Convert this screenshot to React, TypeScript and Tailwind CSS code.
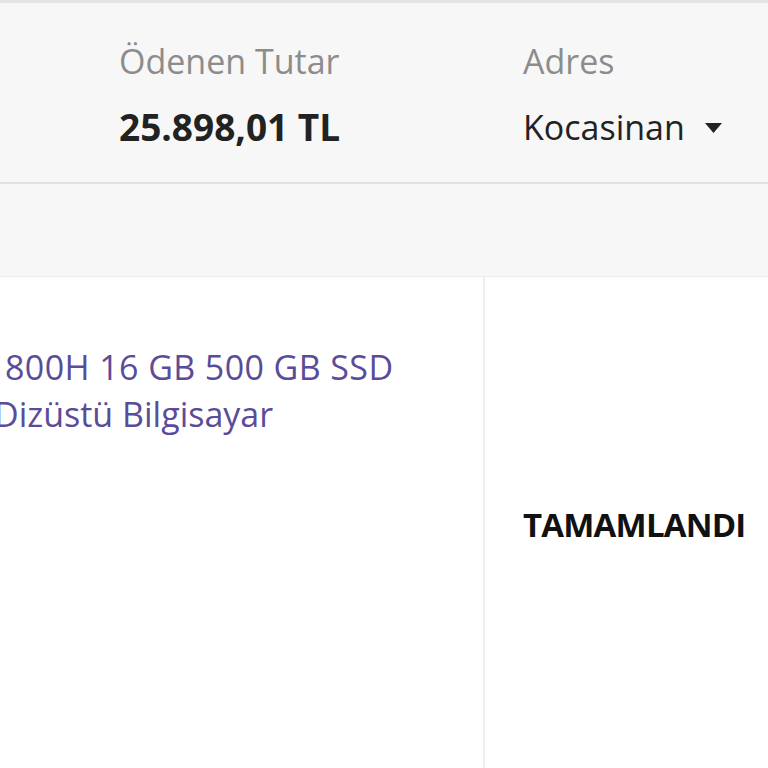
import React from "react";

export default function App() {
  return (
    <div
      className="w-[768px] h-[768px] overflow-hidden bg-white"
      style={{ fontFamily: '"Open Sans", "Liberation Sans", sans-serif' }}
    >
      <div className="border-t-[3px] border-[#e4e4e4] bg-[#f7f7f7] h-[184px] border-b-2 border-b-[#e2e2e2] flex">
        <div className="w-[523px] pl-[119px] pt-[36px] shrink-0">
          <div className="text-[34px] leading-[44px] text-[#8c8c8c]">Ödenen Tutar</div>
          <div className="mt-[22px] text-[37px] leading-[44px] font-bold text-[#222222]">
            25.898,01 TL
          </div>
        </div>
        <div className="pt-[36px]">
          <div className="text-[34px] leading-[44px] text-[#8c8c8c]">Adres</div>
          <div className="mt-[22px] flex items-center text-[34px] leading-[44px] text-[#222222]">
            <span>Kocasinan</span>
            <svg className="ml-[20px] mt-[2px]" width="17" height="11" viewBox="0 0 17 11">
              <path d="M0 0 L17 0 L8.5 10 Z" fill="#222222" />
            </svg>
          </div>
        </div>
      </div>
      <div className="h-[93px] bg-[#f7f7f7] border-b border-[#ececec]" />
      <div className="flex h-[500px]">
        <div className="w-[485px] shrink-0 border-r-2 border-[#efefef] overflow-hidden pt-[67px]">
          <div className="text-[34px] leading-[47px] text-[#5a4c99] whitespace-nowrap">
            <div className="ml-[5px] tracking-[0.4px]">800H 16 GB 500 GB SSD</div>
            <div className="ml-[-6px]">Dizüstü Bilgisayar</div>
          </div>
        </div>
        <div className="flex-1 pl-[38px] pt-[226px]">
          <div className="text-[33px] leading-[44px] font-bold text-[#111111] tracking-[-0.8px]">
            TAMAMLANDI
          </div>
        </div>
      </div>
    </div>
  );
}
